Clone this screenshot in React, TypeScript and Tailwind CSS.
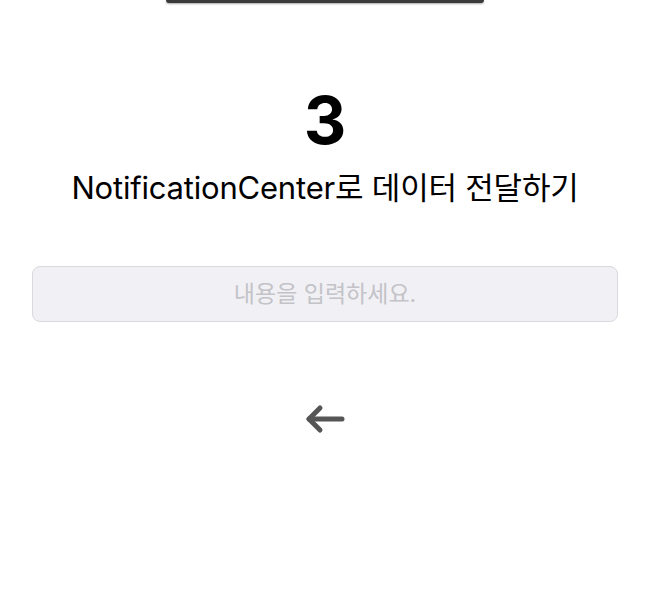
export default function App() {
  return (
    <div className="relative w-[650px] h-[600px] bg-white overflow-hidden font-['Inter','Noto_Sans_CJK_KR',sans-serif]">
      {/* top bezel edge */}
      <div className="absolute left-[166px] top-0 w-[318px] h-[3px] bg-[#3a3a3a] rounded-b-[6px] shadow-[0_1px_2px_rgba(0,0,0,0.35)]" />

      <div className="flex flex-col items-center pt-[80px]">
        <div className="text-[66px] leading-[80px] font-bold text-black">3</div>
        <div className="mt-[6px] text-[31px] leading-[44px] text-black tracking-[-0.2px]">
          NotificationCenter로 데이터 전달하기
        </div>

        <input
          placeholder="내용을 입력하세요."
          className="mt-[56px] w-[586px] h-[56px] rounded-[8px] border border-[#d9d9dd] bg-[#f1f0f5] text-center text-[23px] text-black placeholder:text-[#c3c3c8] outline-none"
        />

        <button className="mt-[82px] flex items-center justify-center">
          <svg width="42" height="30" viewBox="0 0 42 30" fill="none" stroke="#555555" strokeWidth="5" strokeLinecap="round" strokeLinejoin="round">
            <path d="M38 15H5" />
            <path d="M16 4L5 15L16 26" />
          </svg>
        </button>
      </div>
    </div>
  );
}
